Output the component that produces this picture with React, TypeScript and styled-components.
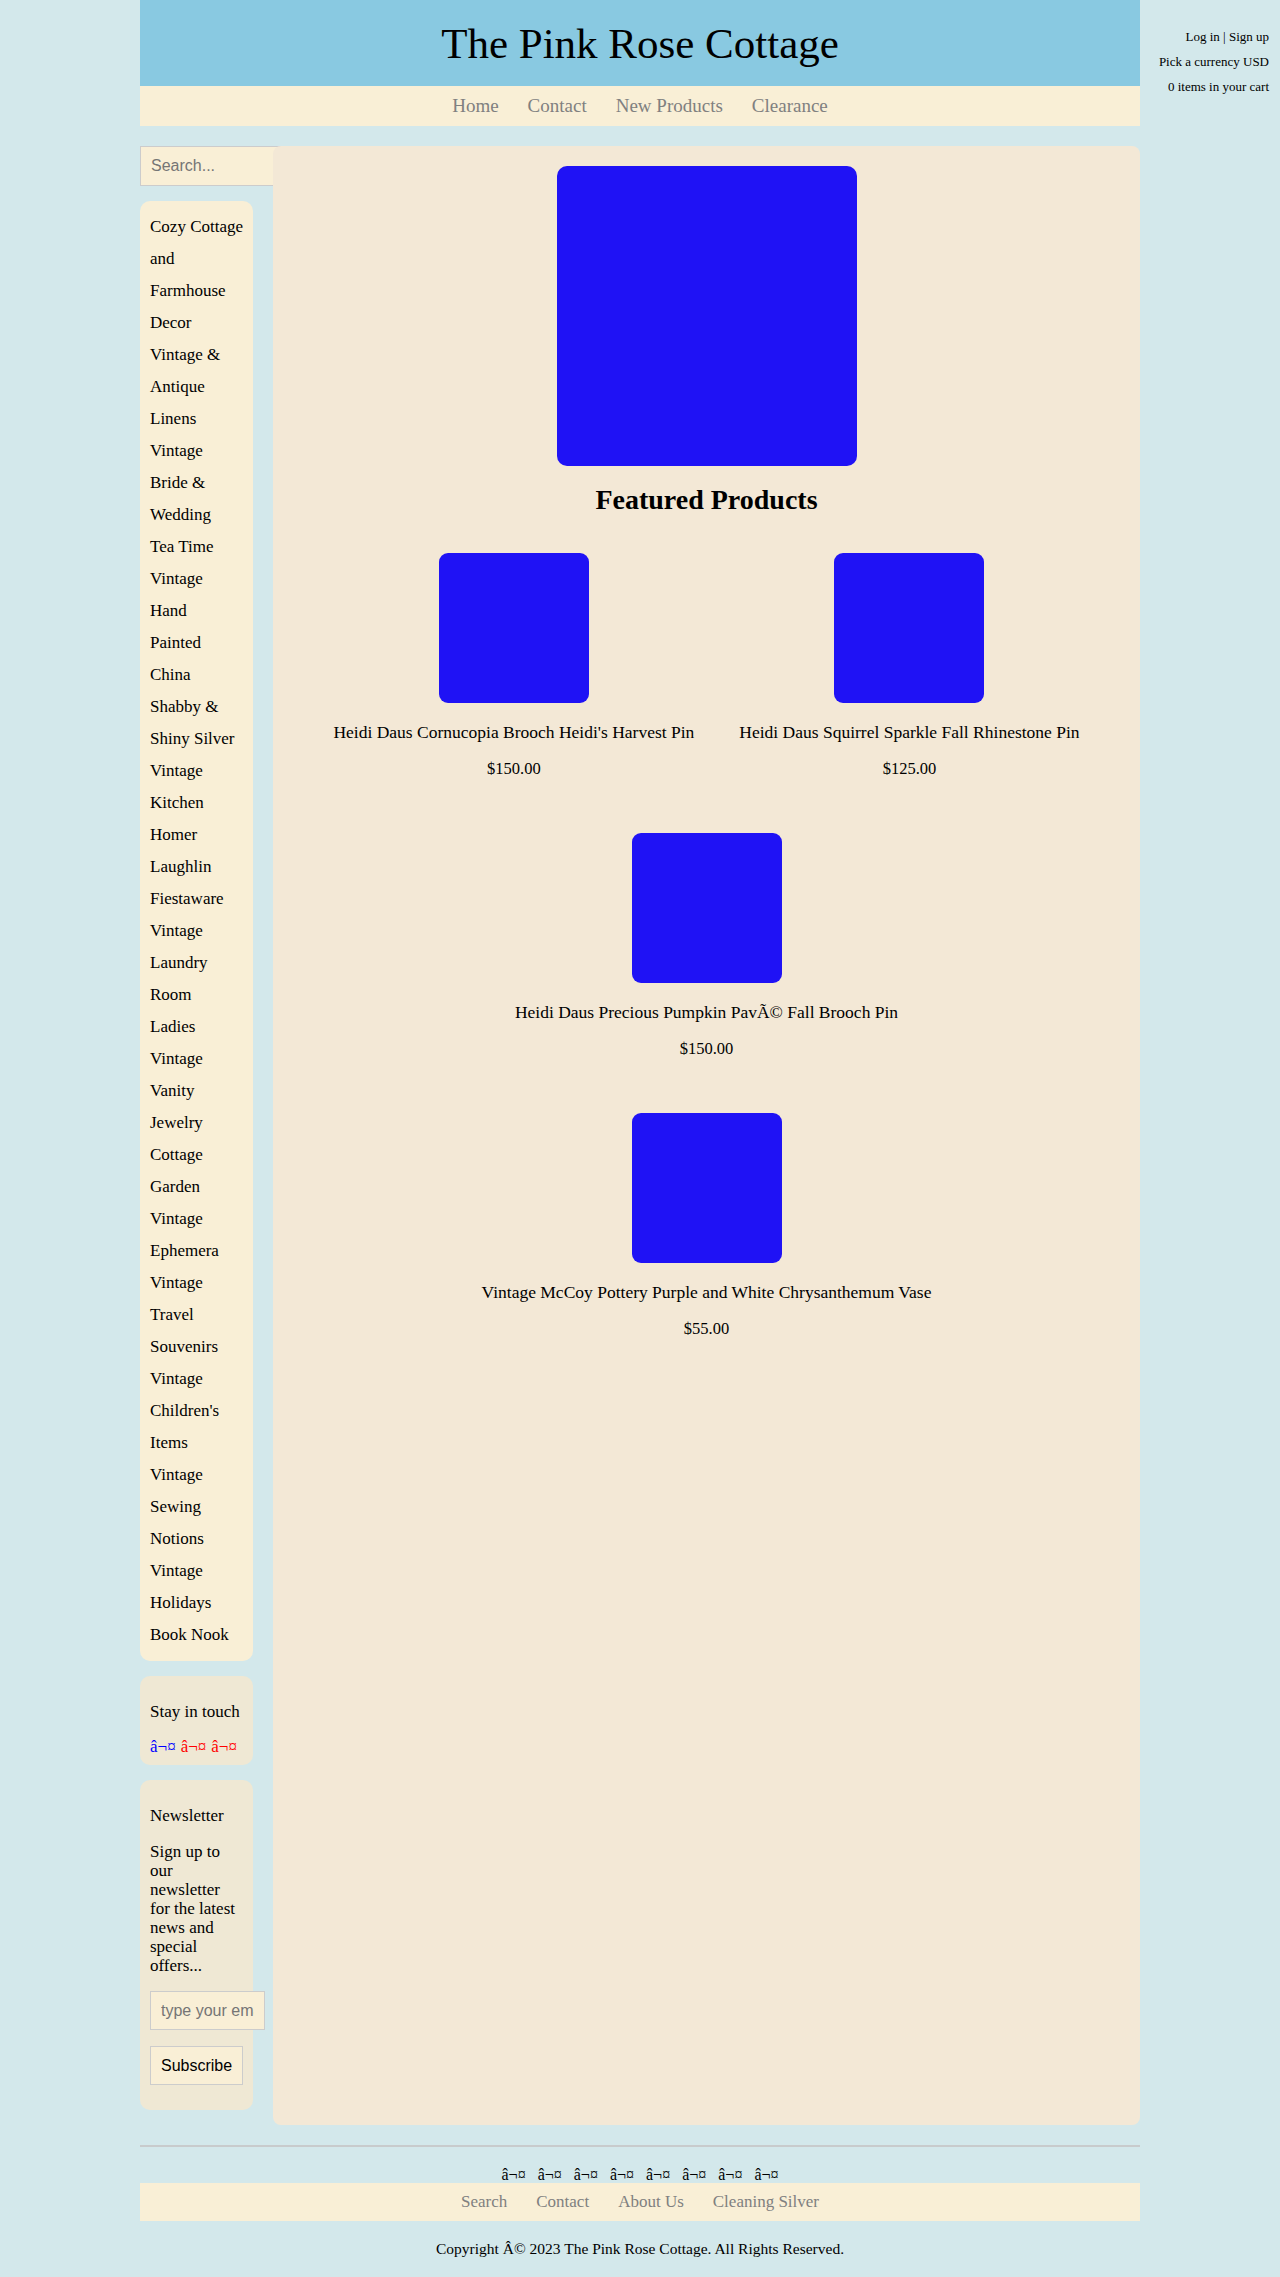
import styled, { createGlobalStyle } from 'styled-components'

const GlobalStyle = createGlobalStyle`
  body {
    margin: 0;
    background: #d3e8eb;
    font-family: "Liberation Serif", Georgia, serif;
    color: #000;
  }
`

const UserLinks = styled.div`
  position: absolute;
  top: 24px;
  right: 11px;
  text-align: right;
  font-size: 13px;
  line-height: 25px;
`

const Page = styled.div`
  width: 1000px;
  margin: 0 auto;
`

const Banner = styled.header`
  background: #89c9e1;
  height: 86px;
  display: flex;
  align-items: center;
  justify-content: center;

  h1 {
    margin: 0;
    font-size: 43px;
    font-weight: normal;
  }
`

const NavBar = styled.nav<{ $size: number }>`
  background: #f9efd6;
  height: ${p => (p.$size > 18 ? 40 : 38)}px;
  display: flex;
  align-items: center;
  justify-content: center;

  a {
    color: #808080;
    text-decoration: none;
    font-size: ${p => p.$size}px;
    padding: 0 14.5px;
  }
`

const Main = styled.div`
  display: flex;
  gap: 20px;
  margin-top: 20px;
`

const Sidebar = styled.aside`
  width: 113px;
  flex-shrink: 0;
  display: flex;
  flex-direction: column;
  align-items: flex-start;
`

const SearchInput = styled.input`
  box-sizing: border-box;
  width: 150px;
  height: 40px;
  margin-bottom: 15px;
  padding: 0 10px;
  background: #f9efd6;
  border: 1px solid #cccccc;
  font-family: "Liberation Sans", Arial, sans-serif;
  font-size: 16px;

  &::placeholder {
    color: #757575;
  }
`

const SideBox = styled.section<{ $tone: 'light' | 'dark' }>`
  box-sizing: border-box;
  width: 113px;
  margin-bottom: 15px;
  padding: 10px;
  border-radius: 10px;
  background: ${p => (p.$tone === 'light' ? '#f9efd6' : '#efe8d4')};
  font-size: 17px;
`

const CategoryList = styled.ul`
  list-style: none;
  margin: 0;
  padding: 0;

  li {
    line-height: 32px;
    white-space: pre;
  }
`

const BoxTitle = styled.h4`
  margin: 16px 0;
  font-size: 17px;
  font-weight: normal;
  line-height: 20px;
`

const SocialIcons = styled.div`
  display: flex;
  gap: 5px;
  font-size: 17px;
  line-height: 17px;
`

const Glyph = styled.span<{ $color: string }>`
  color: ${p => p.$color};
`

const NewsText = styled.p`
  margin: 15px 0 16px;
  line-height: 19px;
  white-space: pre;
`

const EmailInput = styled(SearchInput)`
  width: 115px;
  height: 39px;
  margin-bottom: 16px;
`

const SubscribeButton = styled.button`
  height: 39px;
  margin-bottom: 15px;
  padding: 0 10px;
  background: #f9efd6;
  border: 1px solid #cccccc;
  font-family: "Liberation Sans", Arial, sans-serif;
  font-size: 16px;
  color: #000;
`

const Panel = styled.main`
  position: relative;
  flex: 1;
  padding: 20px;
  background: #f3e8d6;
  border-radius: 8px;
  text-align: center;
`

const Picture = styled.div<{ $size: number }>`
  width: ${p => p.$size}px;
  height: ${p => p.$size}px;
  margin: 0 auto;
  background: #1f12f5;
  border-radius: ${p => (p.$size > 200 ? 10 : 9)}px;
`

const Heading = styled.h2`
  margin: 18px 0;
  font-size: 28px;
  line-height: 32px;
`

const ProductGrid = styled.div`
  display: flex;
  flex-wrap: wrap;
  justify-content: center;
`

const ProductCard = styled.div`
  margin: 0 22.5px;
  padding: 19px 0 36px;
  font-size: 17.5px;
  line-height: 19px;
`

const ProductName = styled.p`
  margin: 20px 0 0;
`

const ProductPrice = styled.p`
  margin: 17px 0 0;
  font-size: 16.5px;
`

const Rule = styled.hr`
  margin: 20px 0 0;
  border: 0;
  border-top: 2px solid #c8cbcc;
`

const FooterIcons = styled.div`
  display: flex;
  justify-content: center;
  gap: 12px;
  margin-top: 20px;
  font-size: 16px;
  line-height: 16px;
`

const Copyright = styled.p`
  margin: 0;
  padding: 19px 0;
  text-align: center;
  font-size: 15.5px;
  line-height: 18px;
`

const categories = [
  'Cozy Cottage\nand\nFarmhouse\nDecor',
  'Vintage &\nAntique\nLinens',
  'Vintage\nBride &\nWedding',
  'Tea Time',
  'Vintage\nHand\nPainted\nChina',
  'Shabby &\nShiny Silver',
  'Vintage\nKitchen',
  'Homer\nLaughlin\nFiestaware',
  'Vintage\nLaundry\nRoom',
  'Ladies\nVintage\nVanity\nJewelry',
  'Cottage\nGarden',
  'Vintage\nEphemera',
  'Vintage\nTravel\nSouvenirs',
  "Vintage\nChildren's\nItems",
  'Vintage\nSewing\nNotions',
  'Vintage\nHolidays',
  'Book Nook',
]

const products = [
  { name: "Heidi Daus Cornucopia Brooch Heidi's Harvest Pin", price: '$150.00' },
  { name: 'Heidi Daus Squirrel Sparkle Fall Rhinestone Pin', price: '$125.00' },
  { name: 'Heidi Daus Precious Pumpkin PavÃ© Fall Brooch Pin', price: '$150.00' },
  { name: 'Vintage McCoy Pottery Purple and White Chrysanthemum Vase', price: '$55.00' },
]

const ICON = 'â¬¤'

export default function App() {
  return (
    <>
      <GlobalStyle />
      <UserLinks>
        <div>Log in | Sign up</div>
        <div>Pick a currency USD</div>
        <div>0 items in your cart</div>
      </UserLinks>

      <Page>
        <Banner>
          <h1>The Pink Rose Cottage</h1>
        </Banner>
        <NavBar $size={19}>
          <a href="#">Home</a>
          <a href="#">Contact</a>
          <a href="#">New Products</a>
          <a href="#">Clearance</a>
        </NavBar>

        <Main>
          <Sidebar>
            <SearchInput placeholder="Search..." />
            <SideBox $tone="light">
              <CategoryList>
                {categories.map(c => (
                  <li key={c}>{c}</li>
                ))}
              </CategoryList>
            </SideBox>
            <SideBox $tone="dark">
              <BoxTitle>Stay in touch</BoxTitle>
              <SocialIcons>
                <Glyph $color="#0000ff">{ICON}</Glyph>
                <Glyph $color="#ff0000">{ICON}</Glyph>
                <Glyph $color="#ff0000">{ICON}</Glyph>
              </SocialIcons>
            </SideBox>
            <SideBox $tone="dark">
              <BoxTitle>Newsletter</BoxTitle>
              <NewsText>{'Sign up to\nour\nnewsletter\nfor the latest\nnews and\nspecial\noffers...'}</NewsText>
              <EmailInput placeholder="type your email" />
              <SubscribeButton>Subscribe</SubscribeButton>
            </SideBox>
          </Sidebar>

          <Panel>
            <Picture $size={300} />
            <Heading>Featured Products</Heading>
            <ProductGrid>
              {products.map(p => (
                <ProductCard key={p.name}>
                  <Picture $size={150} />
                  <ProductName>{p.name}</ProductName>
                  <ProductPrice>{p.price}</ProductPrice>
                </ProductCard>
              ))}
            </ProductGrid>
          </Panel>
        </Main>

        <footer>
          <Rule />
          <FooterIcons>
            {Array.from({ length: 8 }, (_, i) => (
              <span key={i}>{ICON}</span>
            ))}
          </FooterIcons>
          <NavBar $size={17}>
            <a href="#">Search</a>
            <a href="#">Contact</a>
            <a href="#">About Us</a>
            <a href="#">Cleaning Silver</a>
          </NavBar>
          <Copyright>Copyright Â© 2023 The Pink Rose Cottage. All Rights Reserved.</Copyright>
        </footer>
      </Page>
    </>
  )
}
